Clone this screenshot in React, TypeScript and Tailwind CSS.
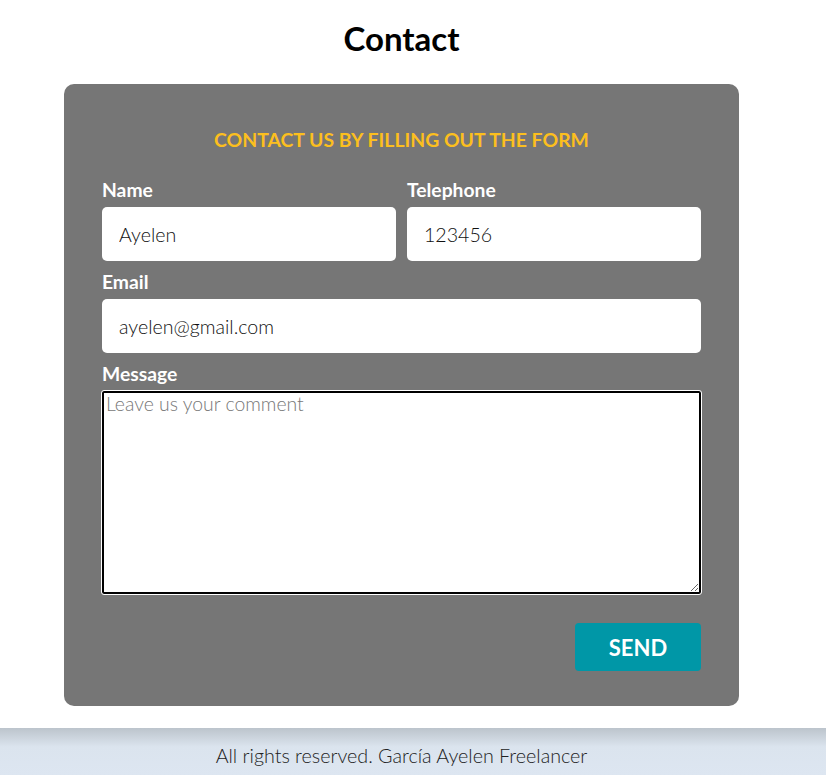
import { useState } from 'react';

export default function App() {
  const [form, setForm] = useState({
    name: 'Ayelen',
    phone: '123456',
    email: 'ayelen@gmail.com',
    message: ''
  });

  const font = { fontFamily: 'Lato, "Open Sans", sans-serif' };

  return (
    <div className="min-h-[775px] bg-white flex flex-col" style={font}>
      <div className="w-[803px]">
        <h1 className="text-center text-[33px] font-bold text-black pt-[16px] leading-[44px]">Contact</h1>

        {/* Form card */}
        <div className="mx-auto mt-[24px] w-[675px] rounded-[10px] bg-[#767676] px-[38px] pt-[44px] pb-[35px]">
          <h2 className="text-center text-[19.4px] font-bold uppercase text-[#fcbf1e] leading-[24px]">
            Contact us by filling out the form
          </h2>

          <div className="mt-[26px] grid grid-cols-2 gap-x-[11px]">
            <div>
              <label className="block text-[19.3px] font-bold text-white leading-[24px] mb-[5px]">Name</label>
              <input
                className="w-full h-[54px] rounded-[5px] bg-white px-[17px] text-[19.6px] font-light text-[#111] outline-none"
                value={form.name}
                onChange={e => setForm({ ...form, name: e.target.value })}
              />
            </div>
            <div>
              <label className="block text-[19.3px] font-bold text-white leading-[24px] mb-[5px]">Telephone</label>
              <input
                className="w-full h-[54px] rounded-[5px] bg-white px-[17px] text-[19.6px] font-light text-[#111] outline-none"
                value={form.phone}
                onChange={e => setForm({ ...form, phone: e.target.value })}
              />
            </div>
          </div>

          <label className="mt-[9px] block text-[19.3px] font-bold text-white leading-[24px] mb-[5px]">Email</label>
          <input
            className="w-full h-[54px] rounded-[5px] bg-white px-[17px] text-[19.6px] font-light text-[#111] outline-none"
            value={form.email}
            onChange={e => setForm({ ...form, email: e.target.value })}
          />

          <label className="mt-[9px] block text-[19.3px] font-bold text-white leading-[24px] mb-[5px]">Message</label>
          <textarea
            className="block w-full h-[203px] rounded-[2px] border-2 border-black bg-white px-[2px] py-0 text-[19.4px] leading-[22px] font-light text-[#111] outline outline-1 outline-white placeholder:text-[#777]"
            placeholder="Leave us your comment"
            value={form.message}
            onChange={e => setForm({ ...form, message: e.target.value })}
          />

          <div className="mt-[29px] flex justify-end">
            <button className="w-[126px] h-[48px] rounded-[4px] bg-[#0097a7] text-[22px] font-bold text-white">
              SEND
            </button>
          </div>
        </div>
      </div>

      <footer className="mt-[22px] h-[47px] bg-gradient-to-b from-[#bcc4cc] via-[#dbe4ee] via-40% to-[#dde6f1]">
        <div className="w-[803px] text-center text-[19.7px] font-light text-[#222] leading-[56px]">
          All rights reserved. García Ayelen Freelancer
        </div>
      </footer>
    </div>
  );
}
